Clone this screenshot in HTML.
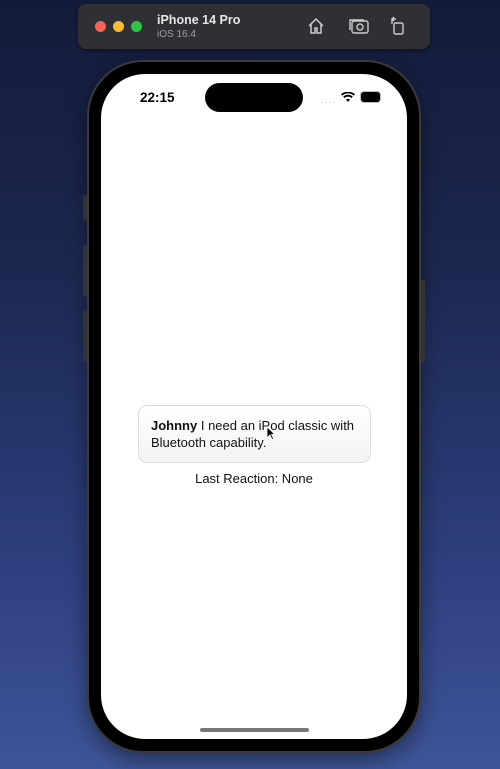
<!DOCTYPE html>
<html><head><meta charset="utf-8"><style>
*{margin:0;padding:0;box-sizing:border-box}
html,body{width:500px;height:769px;overflow:hidden}
body{background:linear-gradient(180deg,#131b39 0%,#1c2850 35%,#2e4080 75%,#3e5598 100%);position:relative;font-family:"Liberation Sans",sans-serif}
.bar{position:absolute;left:78px;top:4px;width:352px;height:45px;background:#2f3034;border-radius:8px;box-shadow:0 1px 3px rgba(0,0,0,.5)}
.dot{position:absolute;top:17px;width:11px;height:11px;border-radius:50%}
.t1{position:absolute;left:79px;top:9px;color:#e6e6e6;font-weight:bold;font-size:12.5px}
.t2{position:absolute;left:79px;top:25px;color:#a0a0a0;font-size:10px}
.phone{position:absolute;left:87px;top:60px;width:334px;height:693px;border-radius:56px;background:#000;border:2px solid #3a3a3c;box-shadow:0 8px 20px rgba(0,0,0,.4)}
.btn{position:absolute;width:4px;background:#333;border-radius:2px}
.screen{position:absolute;left:101px;top:74px;width:306px;height:665px;border-radius:44px;background:#fff;overflow:hidden}
.island{position:absolute;left:104px;top:9px;width:98px;height:29px;border-radius:15px;background:#000}
.time{position:absolute;left:39px;top:16px;font-weight:bold;font-size:13.5px;color:#000}
.bubble{position:absolute;left:37px;top:331px;width:233px;height:58px;border:1px solid #ddd;border-radius:9px;background:linear-gradient(#fff,#f3f3f3);padding:11px 12px;font-size:13px;line-height:17px;color:#111}
.lr{position:absolute;left:0;width:306px;top:397px;text-align:center;font-size:13px;color:#111}
.home{position:absolute;left:99px;top:654px;width:109px;height:4px;border-radius:2px;background:#777}
</style></head><body>
<div class="bar">
<div class="dot" style="left:17px;background:#fe5f57"></div>
<div class="dot" style="left:35px;background:#febc2e"></div>
<div class="dot" style="left:53px;background:#28c840"></div>
<div class="t1">iPhone 14 Pro</div><div class="t2">iOS 16.4</div>
<svg style="position:absolute;left:228px;top:12px" width="20" height="20" viewBox="0 0 20 20" fill="none" stroke="#ccc" stroke-width="1.5"><path d="M3 10L10 3l7 7M5 8v9h4v-5h2v5h4V8"/></svg>
<svg style="position:absolute;left:270px;top:13px" width="22" height="18" viewBox="0 0 22 18" fill="none" stroke="#ccc" stroke-width="1.4"><rect x="4" y="4" width="16" height="12" rx="2"/><path d="M2 13V3h14"/><circle cx="12" cy="10" r="3"/></svg>
<svg style="position:absolute;left:312px;top:12px" width="16" height="20" viewBox="0 0 16 20" fill="none" stroke="#ccc" stroke-width="1.4"><rect x="4" y="7" width="9" height="11" rx="1.5"/><path d="M2 8V3h4M4 1L2 3l2 2"/></svg>
</div>
<div class="phone"></div>
<div class="btn" style="left:83px;top:195px;height:26px"></div>
<div class="btn" style="left:83px;top:245px;height:52px"></div>
<div class="btn" style="left:83px;top:310px;height:52px"></div>
<div class="btn" style="left:421px;top:280px;height:82px"></div>
<div class="screen">
<div class="island"></div>
<div class="time">22:15</div>
<div style="position:absolute;left:220px;top:24px;font-size:8px;color:#aaa;letter-spacing:1px">····</div>
<svg style="position:absolute;left:240px;top:18px" width="14" height="11" viewBox="0 0 14 11"><path d="M7 10l2-2.5a3 3 0 0 0-4 0zM3.5 6a5 5 0 0 1 7 0l1.3-1.4a7 7 0 0 0-9.6 0zM1.2 3.6a8.5 8.5 0 0 1 11.6 0L14 2.3A10.5 10.5 0 0 0 0 2.3z" fill="#000"/></svg>
<div style="position:absolute;left:260px;top:18px;width:19px;height:10px;border-radius:3px;background:#000;box-shadow:0 0 0 1px #bbb"></div>
<div class="bubble"><b>Johnny</b> I need an iPod classic with Bluetooth capability.</div>
<div class="lr">Last Reaction: None</div>
<div class="home"></div>
</div>
<svg style="position:absolute;left:266px;top:426px" width="10" height="15" viewBox="0 0 10 15"><path d="M1 1v11l3-3 2 4.5 1.6-.7-2-4.4H9z" fill="#000" stroke="#fff" stroke-width="0.8"/></svg>
</body></html>
